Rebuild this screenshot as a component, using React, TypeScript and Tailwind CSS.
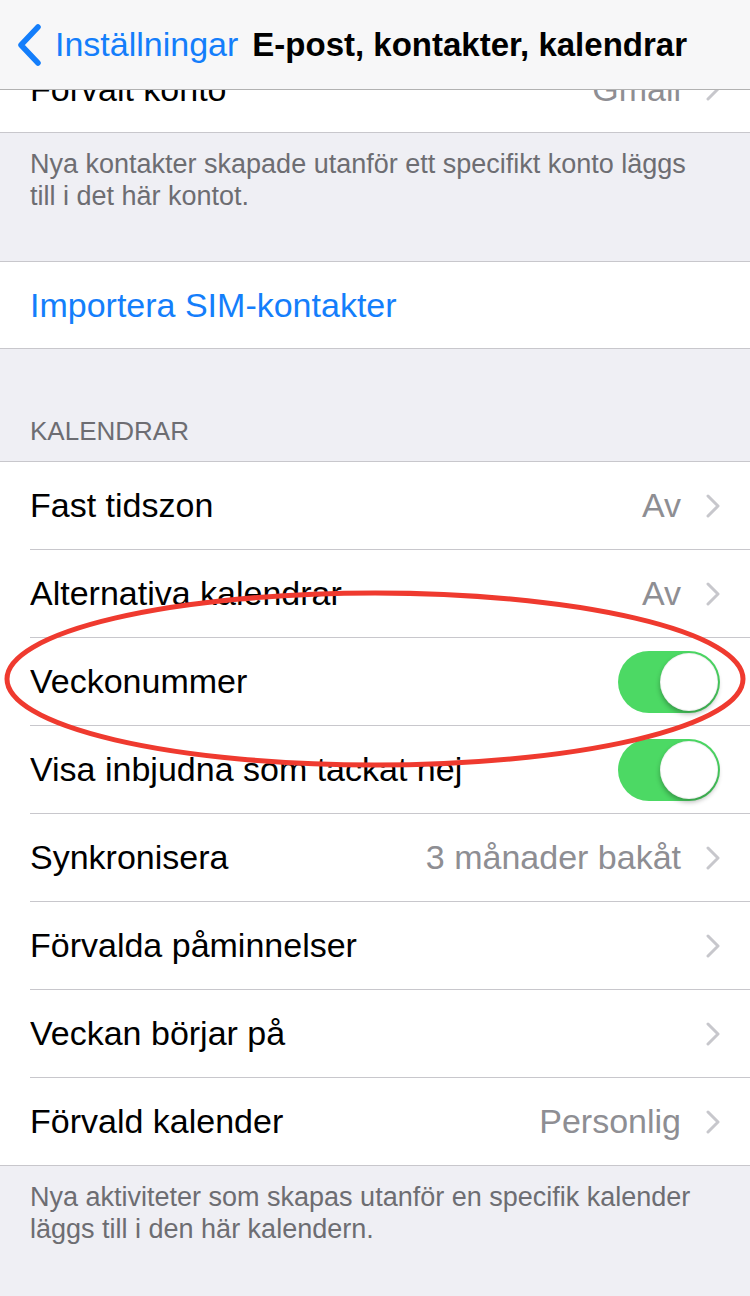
import { ReactNode } from "react";

const FONT = "font-['Liberation_Sans',Arial,sans-serif]";

function Chevron() {
  return (
    <svg width="14" height="24" viewBox="0 0 14 24" className="shrink-0">
      <path d="M2 2 L12 12 L2 22" fill="none" stroke="#c7c7cc" strokeWidth="3" strokeLinecap="round" strokeLinejoin="round" />
    </svg>
  );
}

function Toggle() {
  return (
    <div className="flex h-[62px] w-[102px] shrink-0 items-center justify-end rounded-full bg-[#4cd964] p-[2px]">
      <div className="h-[58px] w-[58px] rounded-full border border-black/5 bg-white shadow-[0_3px_5px_rgba(0,0,0,0.3)]" />
    </div>
  );
}

function Row({ label, value, chevron, toggle, last }: { label: string; value?: string; chevron?: boolean; toggle?: boolean; last?: boolean }) {
  return (
    <div className="bg-white pl-[30px]">
      <div className={`flex items-center pr-[30px] ${last ? "h-[87px]" : "h-[88px] border-b border-[#c8c7cc]"}`}>
        <span className="flex-1 truncate text-[34px] text-black">{label}</span>
        {value && <span className="text-[34px] text-[#8e8e93]">{value}</span>}
        {chevron && <span className="ml-[25px] flex"><Chevron /></span>}
        {toggle && <Toggle />}
      </div>
    </div>
  );
}

function Note({ children, bottom }: { children: ReactNode; bottom: string }) {
  return (
    <div className={`pl-[30px] pr-[50px] pt-[15px] text-[27px] leading-[32px] text-[#6d6d72] ${bottom}`}>
      {children}
    </div>
  );
}

export default function App() {
  return (
    <div className={`relative min-h-[1296px] w-[750px] overflow-hidden bg-[#efeff4] ${FONT}`}>
      {/* nav bar */}
      <div className="flex h-[90px] items-center border-b border-[#b2b2b2] bg-[#f7f7f8] pl-[16px]">
        <svg width="26" height="42" viewBox="0 0 26 42" className="shrink-0">
          <path d="M22 3 L5 21 L22 39" fill="none" stroke="#147efb" strokeWidth="5.5" strokeLinecap="round" strokeLinejoin="round" />
        </svg>
        <span className="ml-[13px] text-[34px] text-[#147efb]">Inställningar</span>
        <span className="ml-[14px] whitespace-nowrap text-[33px] font-bold text-black">E-post, kontakter, kalendrar</span>
      </div>

      {/* row scrolled up beneath the nav bar */}
      <div className="h-[43px] overflow-hidden border-b border-[#c8c7cc] bg-white">
        <div className="-mt-[45px] flex h-[88px] items-center pl-[30px] pr-[30px]">
          <span className="flex-1 text-[34px] text-black">Förvalt konto</span>
          <span className="text-[34px] text-[#8e8e93]">Gmail</span>
          <span className="ml-[25px] flex"><Chevron /></span>
        </div>
      </div>

      <Note bottom="pb-[49px]">
        Nya kontakter skapade utanför ett specifikt konto läggs till i det här kontot.
      </Note>

      <div className="border-y border-[#c8c7cc] bg-white">
        <div className="flex h-[86px] items-center px-[30px] text-[34px] text-[#147efb]">Importera SIM-kontakter</div>
      </div>

      <div className="flex h-[112px] items-end px-[30px] pb-[14px] text-[26px] leading-[32px] text-[#6d6d72]">KALENDRAR</div>

      <div className="border-y border-[#c8c7cc]">
        <Row label="Fast tidszon" value="Av" chevron />
        <Row label="Alternativa kalendrar" value="Av" chevron />
        <Row label="Veckonummer" toggle />
        <Row label="Visa inbjudna som tackat nej" toggle />
        <Row label="Synkronisera" value="3 månader bakåt" chevron />
        <Row label="Förvalda påminnelser" chevron />
        <Row label="Veckan börjar på" chevron />
        <Row label="Förvald kalender" value="Personlig" chevron last />
      </div>

      <Note bottom="pb-[40px]">
        Nya aktiviteter som skapas utanför en specifik kalender läggs till i den här kalendern.
      </Note>

      {/* red hand-drawn annotation */}
      <svg className="pointer-events-none absolute left-0 top-0" width="750" height="1296" viewBox="0 0 750 1296">
        <ellipse cx="375" cy="679" rx="368" ry="86" fill="none" stroke="#ef3a2f" strokeWidth="5" />
      </svg>
    </div>
  );
}
